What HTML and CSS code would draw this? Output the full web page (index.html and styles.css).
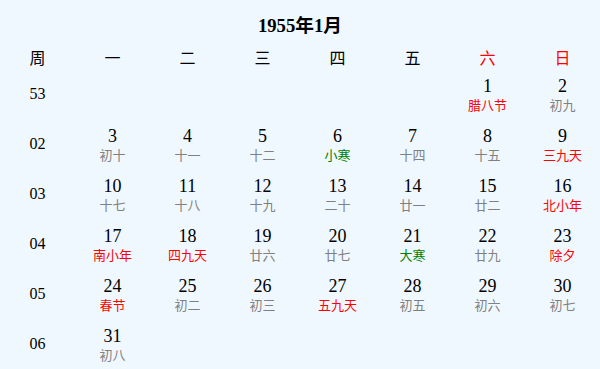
FILE: index.html
```html
<!DOCTYPE html>
<html lang="zh">
<head>
<meta charset="utf-8">
<title>1955年1月</title>
<link rel="stylesheet" href="styles.css">
</head>
<body>
<div class="cal">
  <h3 class="title">1955年1月</h3>
  <table class="grid">
    <thead>
      <tr>
        <th>周</th><th>一</th><th>二</th><th>三</th><th>四</th><th>五</th><th class="we">六</th><th class="we">日</th>
      </tr>
    </thead>
    <tbody>
      <tr>
        <td class="wk">53</td>
        <td></td><td></td><td></td><td></td><td></td>
        <td><div class="d">1</div><div class="l red">腊八节</div></td>
        <td><div class="d">2</div><div class="l">初九</div></td>
      </tr>
      <tr>
        <td class="wk">02</td>
        <td><div class="d">3</div><div class="l">初十</div></td>
        <td><div class="d">4</div><div class="l">十一</div></td>
        <td><div class="d">5</div><div class="l">十二</div></td>
        <td><div class="d">6</div><div class="l green">小寒</div></td>
        <td><div class="d">7</div><div class="l">十四</div></td>
        <td><div class="d">8</div><div class="l">十五</div></td>
        <td><div class="d">9</div><div class="l red">三九天</div></td>
      </tr>
      <tr>
        <td class="wk">03</td>
        <td><div class="d">10</div><div class="l">十七</div></td>
        <td><div class="d">11</div><div class="l">十八</div></td>
        <td><div class="d">12</div><div class="l">十九</div></td>
        <td><div class="d">13</div><div class="l">二十</div></td>
        <td><div class="d">14</div><div class="l">廿一</div></td>
        <td><div class="d">15</div><div class="l">廿二</div></td>
        <td><div class="d">16</div><div class="l red">北小年</div></td>
      </tr>
      <tr>
        <td class="wk">04</td>
        <td><div class="d">17</div><div class="l red">南小年</div></td>
        <td><div class="d">18</div><div class="l red">四九天</div></td>
        <td><div class="d">19</div><div class="l">廿六</div></td>
        <td><div class="d">20</div><div class="l">廿七</div></td>
        <td><div class="d">21</div><div class="l green">大寒</div></td>
        <td><div class="d">22</div><div class="l">廿九</div></td>
        <td><div class="d">23</div><div class="l red">除夕</div></td>
      </tr>
      <tr>
        <td class="wk">05</td>
        <td><div class="d">24</div><div class="l red">春节</div></td>
        <td><div class="d">25</div><div class="l">初二</div></td>
        <td><div class="d">26</div><div class="l">初三</div></td>
        <td><div class="d">27</div><div class="l red">五九天</div></td>
        <td><div class="d">28</div><div class="l">初五</div></td>
        <td><div class="d">29</div><div class="l">初六</div></td>
        <td><div class="d">30</div><div class="l">初七</div></td>
      </tr>
      <tr>
        <td class="wk">06</td>
        <td><div class="d">31</div><div class="l">初八</div></td>
        <td></td><td></td><td></td><td></td><td></td><td></td>
      </tr>
    </tbody>
  </table>
</div>
</body>
</html>
```
FILE: styles.css
```css
html, body {
  margin: 0;
  padding: 0;
  background: #f0f8ff;
}
body {
  font-family: "Liberation Serif", "Noto Sans CJK SC", serif;
  color: #000;
}
.cal {
  width: 600px;
}
.title {
  margin: 0;
  padding: 15px 0 11px;
  height: 22px;
  line-height: 22px;
  font-size: 18.72px;
  font-weight: bold;
  text-align: center;
}
.grid {
  width: 600px;
  border-collapse: collapse;
  table-layout: fixed;
}
.grid th, .grid td {
  width: 75px;
  padding: 0;
  text-align: center;
  vertical-align: middle;
}
.grid th {
  height: 21px;
  font-size: 16px;
  font-weight: normal;
  line-height: 21px;
}
.grid th.we {
  color: #ff0000;
}
.grid td {
  height: 50px;
}
.wk {
  font-size: 16px;
}
.d {
  font-size: 18px;
  line-height: 22px;
}
.l {
  font-family: "Noto Sans CJK SC", sans-serif;
  font-size: 13px;
  line-height: 16px;
  color: #808080;
}
.l.red {
  color: #ff0000;
}
.l.green {
  color: #008000;
}
```
